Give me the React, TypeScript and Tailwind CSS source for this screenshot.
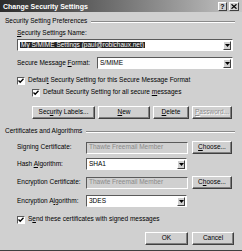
import React from "react";

const FONT = "font-['Liberation_Sans',Arial,sans-serif]";

function U({ children }: { children: React.ReactNode }) {
  return <span className="underline underline-offset-[1px]">{children}</span>;
}

function DropBtn() {
  return (
    <div className="w-[8px] h-[9px] mr-[1px] bg-[#d0d0d0] border border-t-white border-l-white border-b-[#404040] border-r-[#404040] flex items-center justify-center shrink-0">
      <svg width="5" height="3" viewBox="0 0 5 3">
        <path d="M0 0H5L2.5 3Z" fill="#000" />
      </svg>
    </div>
  );
}

function Combo({ children, className = "" }: { children?: React.ReactNode; className?: string }) {
  return (
    <div
      className={`h-[12px] bg-white border border-t-[#5a5a5a] border-l-[#5a5a5a] border-b-white border-r-white flex items-center ${className}`}
    >
      <div className="flex-1 min-w-0 pl-[2px] whitespace-nowrap overflow-hidden leading-none">{children}</div>
      <DropBtn />
    </div>
  );
}

function Field({ children, className = "" }: { children?: React.ReactNode; className?: string }) {
  return (
    <div
      className={`h-[12px] bg-[#d0d0d0] border border-t-[#5a5a5a] border-l-[#5a5a5a] border-b-white border-r-white flex items-center pl-[2px] whitespace-nowrap overflow-hidden leading-none text-[#8a8a8a] ${className}`}
    >
      {children}
    </div>
  );
}

function Btn({
  children,
  disabled = false,
  className = "",
}: {
  children: React.ReactNode;
  disabled?: boolean;
  className?: string;
}) {
  return (
    <div
      className={`h-[13px] bg-[#d0d0d0] border border-t-white border-l-white border-b-[#404040] border-r-[#404040] shadow-[inset_-1px_-1px_0_#808080] flex items-center justify-center whitespace-nowrap leading-none shrink-0 ${
        disabled ? "text-[#8e8e8e] [text-shadow:1px_1px_0_#fff]" : "text-black"
      } ${className}`}
    >
      {children}
    </div>
  );
}

function Check() {
  return (
    <div className="w-[8px] h-[8px] bg-white border border-t-[#5a5a5a] border-l-[#5a5a5a] border-b-white border-r-white flex items-center justify-center shrink-0">
      <svg width="6" height="6" viewBox="0 0 6 6">
        <path d="M0.5 2.5L2.2 4.3L5.5 0.8" stroke="#000" strokeWidth="1.3" fill="none" />
      </svg>
    </div>
  );
}

function GroupHeader({ title }: { title: string }) {
  return (
    <div className="flex items-center h-[9px] pl-[5px] pr-[7px]">
      <span className="whitespace-nowrap leading-none">{title}</span>
      <div className="flex-1 ml-[4px] h-[2px] border-t border-t-[#8a8a8a] border-b border-b-white" />
    </div>
  );
}

export default function App() {
  return (
    <div
      className={`${FONT} w-[242px] h-[251px] bg-[#d0d0d0] text-[6.5px] text-black flex flex-col border-b border-b-[#404040] overflow-hidden`}
    >
      {/* Title bar */}
      <div className="h-[12px] bg-linear-to-r from-[#2c2c2c] to-[#c6c6c6] flex items-center pl-[3px] pr-[3px] shrink-0">
        <span className="text-white font-bold text-[7px] leading-none whitespace-nowrap flex-1">
          Change Security Settings
        </span>
        <div className="w-[9px] h-[9px] bg-[#d0d0d0] border border-t-white border-l-white border-b-[#404040] border-r-[#404040] flex items-center justify-center font-bold text-[7px] leading-none">
          ?
        </div>
        <div className="w-[10px] h-[9px] ml-[2px] bg-[#d0d0d0] border border-t-white border-l-white border-b-[#404040] border-r-[#404040] flex items-center justify-center">
          <svg width="6" height="5" viewBox="0 0 6 5">
            <path d="M0.5 0.3L5.5 4.7M5.5 0.3L0.5 4.7" stroke="#000" strokeWidth="1.2" />
          </svg>
        </div>
      </div>

      <div className="mt-[5px]">
        <GroupHeader title="Security Setting Preferences" />
      </div>

      <div className="mt-[3px] h-[9px] pl-[17px] flex items-center leading-none">
        <span>
          <U>S</U>ecurity Settings Name:
        </span>
      </div>

      <div className="mt-[1px] pl-[17px] pr-[9px]">
        <Combo>
          <span className="bg-[#242424] text-white px-[1px] py-[1px]">My S/MIME Settings (paul@robichaux.net)</span>
        </Combo>
      </div>

      <div className="mt-[6px] pl-[17px] pr-[9px] flex items-center h-[12px]">
        <span className="w-[80px] whitespace-nowrap leading-none">
          Secure Message <U>F</U>ormat:
        </span>
        <Combo className="flex-1">S/MIME</Combo>
      </div>

      <div className="mt-[7px] pl-[17px] flex items-center h-[9px] gap-[3px]">
        <Check />
        <span className="whitespace-nowrap leading-none">
          Defaul<U>t</U> Security Setting for this Secure Message Format
        </span>
      </div>

      <div className="mt-[3px] pl-[32px] flex items-center h-[9px] gap-[3px]">
        <Check />
        <span className="whitespace-nowrap leading-none">
          Default Security Setting for all secure <U>m</U>essages
        </span>
      </div>

      <div className="mt-[9px] pl-[32px] flex items-center gap-[3px]">
        <Btn className="w-[63px]">
          <span>
            Sec<U>u</U>rity Labels...
          </span>
        </Btn>
        <Btn className="w-[52px]">
          <span>
            <U>N</U>ew
          </span>
        </Btn>
        <Btn className="w-[36px]">
          <span>
            <U>D</U>elete
          </span>
        </Btn>
        <Btn className="w-[40px]" disabled>
          <span>
            <U>P</U>assword...
          </span>
        </Btn>
      </div>

      <div className="mt-[8px]">
        <GroupHeader title="Certificates and Algorithms" />
      </div>

      <div className="mt-[5px] pl-[17px] flex items-center h-[13px]">
        <span className="w-[69px] whitespace-nowrap leading-none">Signing Certificate:</span>
        <Field className="w-[102px]">Thawte Freemail Member</Field>
        <Btn className="w-[40px] ml-[4px]">
          <span>
            <U>C</U>hoose...
          </span>
        </Btn>
      </div>

      <div className="mt-[4px] pl-[17px] flex items-center h-[12px]">
        <span className="w-[69px] whitespace-nowrap leading-none">
          Hash <U>A</U>lgorithm:
        </span>
        <Combo className="w-[101px]">SHA1</Combo>
      </div>

      <div className="mt-[6px] pl-[17px] flex items-center h-[13px]">
        <span className="w-[69px] whitespace-nowrap leading-none">Encryption Certificate:</span>
        <Field className="w-[102px]">Thawte Freemail Member</Field>
        <Btn className="w-[40px] ml-[4px]">
          <span>
            C<U>h</U>oose...
          </span>
        </Btn>
      </div>

      <div className="mt-[6px] pl-[17px] flex items-center h-[12px]">
        <span className="w-[69px] whitespace-nowrap leading-none">
          Encryption A<U>l</U>gorithm:
        </span>
        <Combo className="w-[101px]">3DES</Combo>
      </div>

      <div className="mt-[8px] pl-[17px] flex items-center h-[9px] gap-[3px]">
        <Check />
        <span className="whitespace-nowrap leading-none">
          S<U>e</U>nd these certificates with signed messages
        </span>
      </div>

      <div className="mt-[8px] pr-[8px] flex items-center justify-end gap-[4px]">
        <Btn className="w-[43px]">OK</Btn>
        <Btn className="w-[42px]">Cancel</Btn>
      </div>
    </div>
  );
}
